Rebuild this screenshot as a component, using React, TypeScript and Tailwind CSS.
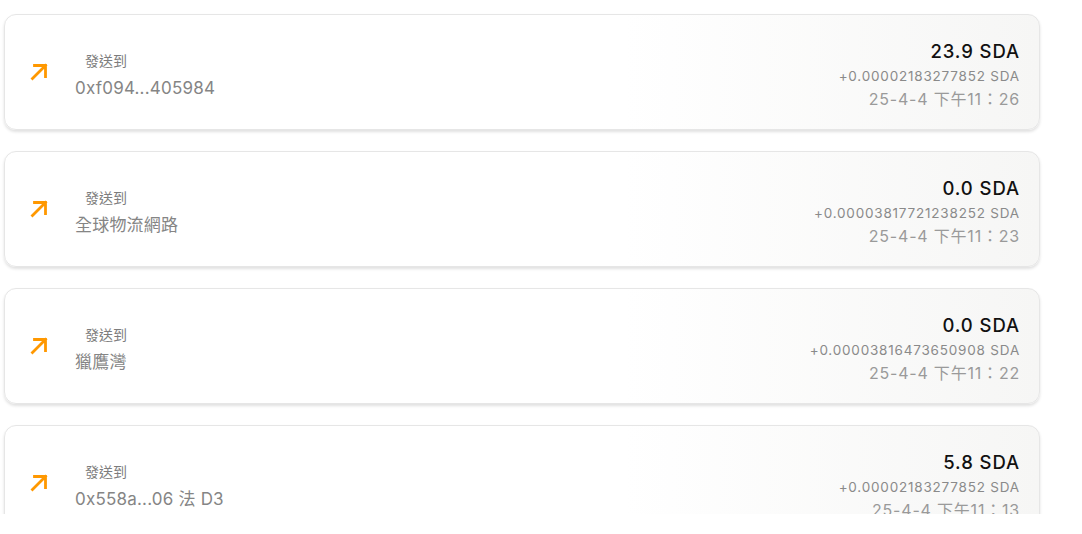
import React from "react";

type Tx = { to: string; amount: string; fee: string; time: string };

const txs: Tx[] = [
  { to: "0xf094...405984", amount: "23.9 SDA", fee: "+0.00002183277852 SDA", time: "25-4-4 下午11：26" },
  { to: "全球物流網路", amount: "0.0 SDA", fee: "+0.00003817721238252 SDA", time: "25-4-4 下午11：23" },
  { to: "獵鷹灣", amount: "0.0 SDA", fee: "+0.00003816473650908 SDA", time: "25-4-4 下午11：22" },
  { to: "0x558a...06 法 D3", amount: "5.8 SDA", fee: "+0.00002183277852 SDA", time: "25-4-4 下午11：13" },
];

function ArrowIcon() {
  return (
    <svg width="24" height="24" viewBox="0 0 24 24" className="shrink-0" fill="none">
      <path
        d="M7.5 5.5H18.5V16.5M18.5 5.5L5.5 18.5"
        stroke="#FF9800"
        strokeWidth="2.8"
        strokeLinecap="square"
        strokeLinejoin="miter"
      />
    </svg>
  );
}

export default function App() {
  return (
    <div
      className="w-[1082px] h-[534px] bg-white"
      style={{ fontFamily: 'Inter, "Noto Sans CJK TC", sans-serif' }}
    >
      <div className="h-[514px] overflow-hidden pt-[14px] pl-[4px]">
        <div className="flex flex-col gap-[21px] w-[1036px]">
          {txs.map((t, i) => (
            <div
              key={i}
              className="h-[116px] shrink-0 rounded-[12px] border border-[#e6e6e6] bg-gradient-to-r from-white from-60% to-[#f6f6f5] shadow-[0_2px_3px_rgba(0,0,0,0.12)] flex items-center pl-[22px] pr-[19px]"
            >
              <ArrowIcon />
              <div className="ml-[24px] flex flex-col pt-[5px]">
                <span className="ml-[10px] text-[14px] leading-[20px] text-[#7d7d7d]">發送到</span>
                <span className="mt-[6px] text-[17px] leading-[22px] tracking-[0.2px] text-[#858585]">{t.to}</span>
              </div>
              <div className="ml-auto flex flex-col items-end pt-[4px]">
                <span className="text-[18.5px] leading-[24px] font-[550] tracking-[0.9px] text-[#111]">{t.amount}</span>
                <span className="text-[13.5px] leading-[20px] tracking-[0.8px] text-[#8a8a8a] mt-[3px]">{t.fee}</span>
                <span className="text-[16px] leading-[22px] tracking-[0.8px] text-[#9a9a9a] mt-[2px]">{t.time}</span>
              </div>
            </div>
          ))}
        </div>
      </div>
    </div>
  );
}
